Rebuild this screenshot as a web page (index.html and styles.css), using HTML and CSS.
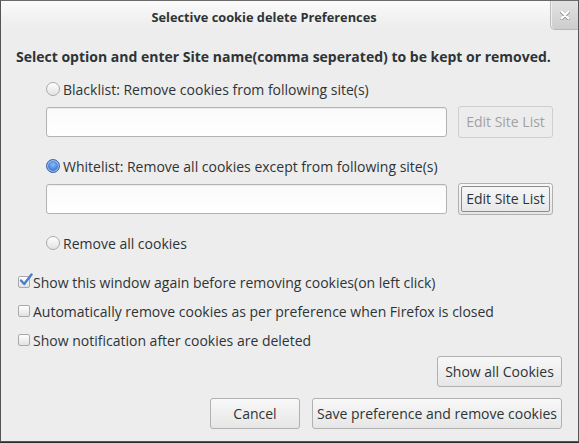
FILE: index.html
```html
<!DOCTYPE html>
<html>
<head>
<meta charset="utf-8">
<link rel="stylesheet" href="styles.css">
</head>
<body>
<div class="window">
  <div class="titlebar">
    <div class="title">Selective cookie delete Preferences</div>
    <div class="close">
      <svg width="10" height="10" viewBox="0 0 10 10"><path d="M1.5 1.5 L8.5 8.5 M8.5 1.5 L1.5 8.5" stroke="#8a8a8a" stroke-width="3" stroke-linecap="round" transform="translate(0,0.6)"/><path d="M1.5 1.5 L8.5 8.5 M8.5 1.5 L1.5 8.5" stroke="#ffffff" stroke-width="2.4" stroke-linecap="round"/></svg>
    </div>
  </div>
  <div class="content">
    <div class="heading">Select option and enter Site name(comma seperated) to be kept or removed.</div>
    <div class="group">
      <label class="opt opt-first"><span class="radio"></span>Blacklist: Remove cookies from following site(s)</label>
      <div class="field-row">
        <div class="input"></div>
        <div class="btn btn-edit disabled">Edit Site List</div>
      </div>
      <label class="opt"><span class="radio checked"></span>Whitelist: Remove all cookies except from following site(s)</label>
      <div class="field-row">
        <div class="input"></div>
        <div class="btn btn-edit default"><span>Edit Site List</span></div>
      </div>
      <label class="opt"><span class="radio"></span>Remove all cookies</label>
    </div>
    <div class="checks">
      <label class="chk chk-first"><span class="box checked"><svg class="tick" width="14" height="14" viewBox="0 0 14 14"><path d="M2 7.5 L5.2 11 L12.5 1.5" fill="none" stroke="#4a7fc9" stroke-width="2.4" stroke-linecap="round" stroke-linejoin="round"/></svg></span>Show this window again before removing cookies(on left click)</label>
      <label class="chk"><span class="box"></span>Automatically remove cookies as per preference when Firefox is closed</label>
      <label class="chk"><span class="box"></span>Show notification after cookies are deleted</label>
    </div>
    <div class="show-row">
      <div class="btn btn-show">Show all Cookies</div>
    </div>
    <div class="actions">
      <div class="btn btn-cancel">Cancel</div>
      <div class="btn btn-save">Save preference and remove cookies</div>
    </div>
  </div>
</div>
</body>
</html>
```
FILE: styles.css
```css
html, body {
  margin: 0;
  padding: 0;
  background: #2b2b2b;
}
body {
  font-family: "Open Sans", "DejaVu Sans", sans-serif;
  font-size: 14px;
  color: #2e3436;
}
.window {
  width: 579px;
  height: 442px;
  box-sizing: border-box;
  border: 1px solid #555;
  border-top-color: #6a6a6a;
  background: #ededed;
  display: flex;
  flex-direction: column;
  position: relative;
}
.titlebar {
  height: 29px;
  background: linear-gradient(#fbfbfb, #f1f1f1 60%, #ededed);
  display: flex;
  align-items: center;
  justify-content: center;
  padding-right: 51px;
  box-sizing: border-box;
}
.title {
  font-weight: bold;
  font-size: 12.8px;
  color: #2e3436;
  padding-top: 2px;
}
.close {
  position: absolute;
  top: 0;
  right: 0;
  width: 27px;
  height: 28px;
  background: linear-gradient(#e2e2e2, #cdcdcd);
  border-left: 1px solid #bdbdbd;
  border-bottom: 1px solid #b8b8b8;
  border-bottom-left-radius: 5px;
  box-shadow: inset 1px 0 0 #efefef;
  display: flex;
  align-items: center;
  justify-content: center;
}
.content {
  padding: 0 16px 0 15px;
  display: flex;
  flex-direction: column;
}
.heading {
  margin-top: 18px;
  height: 18px;
  line-height: 18px;
  font-weight: bold;
  font-size: 14px;
}
.group {
  padding-left: 30px;
  margin-top: 13px;
  display: flex;
  flex-direction: column;
}
.opt {
  display: flex;
  align-items: center;
  height: 20px;
  margin-top: 19px;
}
.opt-first { margin-top: 0; }
.radio {
  width: 12px;
  height: 12px;
  border-radius: 50%;
  border: 1px solid #a9a9a9;
  background: linear-gradient(#ffffff, #e2e2e2);
  margin: 0 3px 0 0;
  flex: none;
  box-sizing: content-box;
}
.radio.checked {
  border-color: #3d6aa6;
  background: radial-gradient(circle at 50% 40%, #8fbdf5 0, #4f8be0 45%, #2d66c0 80%);
  box-shadow: inset 0 0 0 1px rgba(255,255,255,0.55);
}
.field-row {
  display: flex;
  align-items: center;
  gap: 11px;
  height: 31px;
  margin-top: 7px;
}
.input {
  width: 399px;
  height: 28px;
  border: 1px solid #b3b3b3;
  border-radius: 3px;
  background: linear-gradient(#fafafa, #ffffff);
  box-shadow: inset 0 1px 1px rgba(0,0,0,0.06);
}
.btn {
  box-sizing: border-box;
  height: 31px;
  border: 1px solid #b1b1b1;
  border-radius: 3px;
  background: linear-gradient(#f8f8f8, #e6e6e6);
  display: flex;
  align-items: center;
  justify-content: center;
  color: #2e3436;
  white-space: nowrap;
}
.btn-edit { width: 95px; height: 32px; }
.btn.disabled {
  border-color: #cfcfcf;
  background: #ececec;
  color: #a2a2a2;
}
.btn.default {
  padding: 2px;
}
.btn.default span {
  flex: 1;
  align-self: stretch;
  display: flex;
  align-items: center;
  justify-content: center;
  border: 1px solid #8c8c8c;
  border-radius: 2px;
}
.checks {
  padding-left: 2px;
  display: flex;
  flex-direction: column;
}
.chk {
  display: flex;
  align-items: center;
  height: 20px;
  margin-top: 9px;
}
.chk-first { margin-top: 19px; }
.box {
  position: relative;
  width: 10px;
  height: 10px;
  border: 1px solid #a9a9a9;
  border-radius: 2px;
  background: linear-gradient(#ffffff, #e2e2e2);
  margin-right: 3px;
  flex: none;
}
.tick {
  position: absolute;
  left: 0;
  top: -4px;
}
.show-row {
  display: flex;
  justify-content: flex-end;
  margin-top: 6px;
}
.btn-show { width: 125px; }
.actions {
  display: flex;
  justify-content: flex-end;
  gap: 12px;
  margin-top: 11px;
}
.btn-cancel { width: 90px; }
.btn-save { width: 250px; }
```
